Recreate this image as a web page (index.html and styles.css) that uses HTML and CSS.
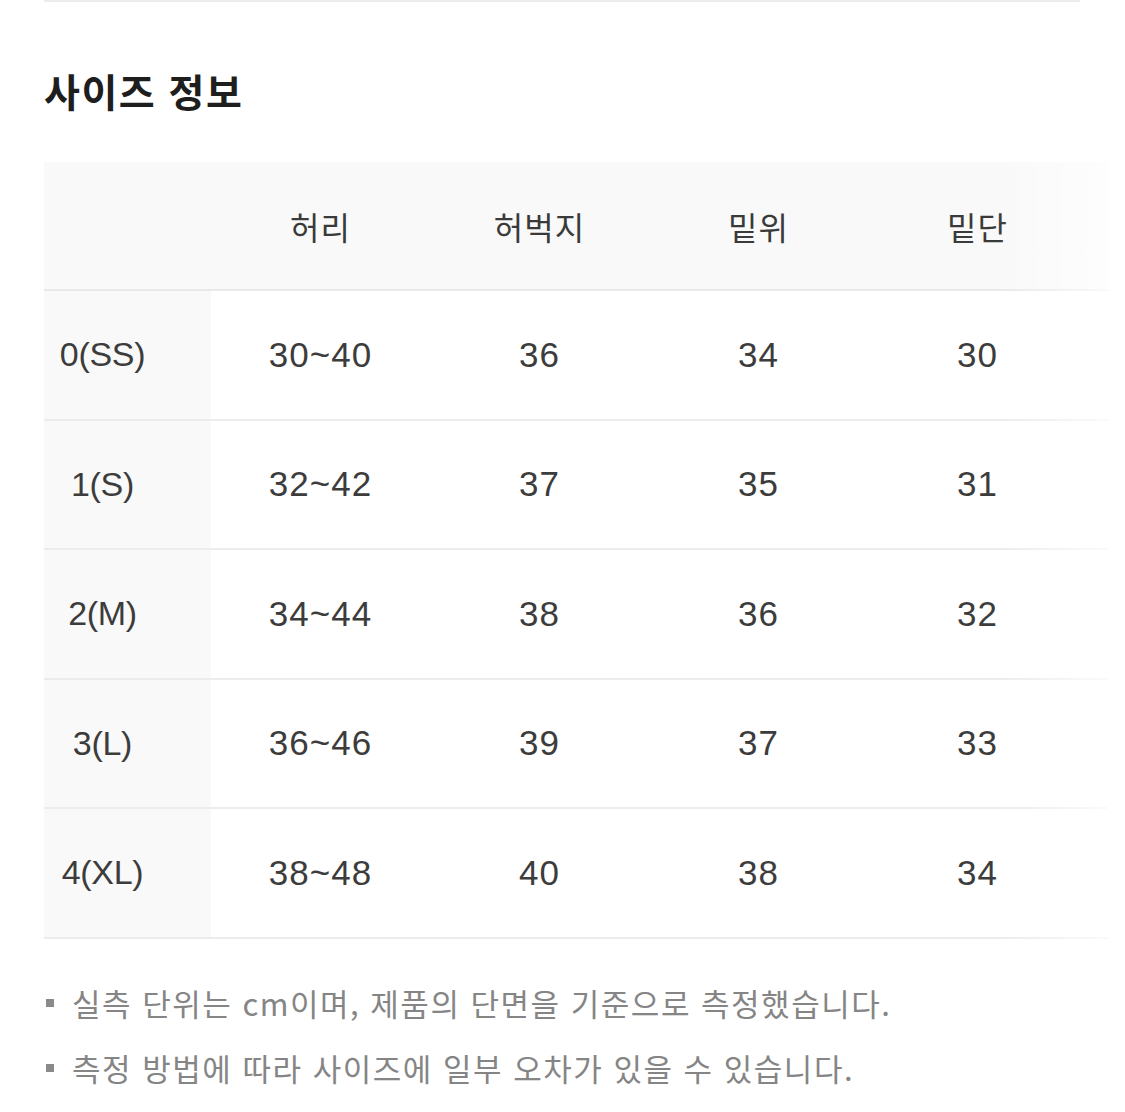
FILE: index.html
```html
<!DOCTYPE html>
<html lang="ko">
<head>
<meta charset="utf-8">
<link rel="stylesheet" href="styles.css">
</head>
<body>
<div class="page">
  <div class="topline"></div>
  <h2 class="title">사이즈 정보</h2>
  <div class="table-wrap">
    <table class="size-table">
      <colgroup>
        <col class="c-label"><col class="c-val"><col class="c-val"><col class="c-val"><col class="c-val"><col class="c-rest">
      </colgroup>
      <thead>
        <tr><th></th><th>허리</th><th>허벅지</th><th>밑위</th><th>밑단</th><th></th></tr>
      </thead>
      <tbody>
        <tr><td class="label">0(SS)</td><td>30~40</td><td>36</td><td>34</td><td>30</td><td></td></tr>
        <tr><td class="label">1(S)</td><td>32~42</td><td>37</td><td>35</td><td>31</td><td></td></tr>
        <tr><td class="label">2(M)</td><td>34~44</td><td>38</td><td>36</td><td>32</td><td></td></tr>
        <tr><td class="label">3(L)</td><td>36~46</td><td>39</td><td>37</td><td>33</td><td></td></tr>
        <tr><td class="label">4(XL)</td><td>38~48</td><td>40</td><td>38</td><td>34</td><td></td></tr>
      </tbody>
    </table>
    <div class="fade"></div>
  </div>
  <ul class="notes">
    <li>실측 단위는 cm이며, 제품의 단면을 기준으로 측정했습니다.</li>
    <li>측정 방법에 따라 사이즈에 일부 오차가 있을 수 있습니다.</li>
  </ul>
</div>
</body>
</html>
```

FILE: styles.css
```css
html, body {
  margin: 0;
  padding: 0;
  background: #fff;
}
body {
  font-family: "Liberation Sans", "Noto Sans CJK KR", sans-serif;
  color: #333;
}
.page {
  padding-left: 44px;
}
.topline {
  width: 1036px;
  height: 2px;
  background: #ececec;
}
.title {
  margin: 63px 0 0 0;
  font-family: "Noto Sans CJK KR", sans-serif;
  font-size: 39px;
  font-weight: 700;
  line-height: 50px;
  color: #1e1e1e;
  letter-spacing: 1.5px;
}
.table-wrap {
  position: relative;
  margin-top: 47px;
  width: 1064px;
  overflow: hidden;
}
.size-table {
  border-collapse: collapse;
  table-layout: fixed;
  width: 1064px;
}
.c-label { width: 167px; }
.c-val { width: 219px; }
.c-rest { width: 21px; }
.size-table th {
  height: 127px;
  padding: 0;
  background: #f9f9f9;
  font-family: "Noto Sans CJK KR", sans-serif;
  font-weight: 400;
  font-size: 32px;
  letter-spacing: 1px;
  color: #3a3a3a;
  text-align: center;
  border-bottom: 2px solid #e9e9e9;
}
.size-table td {
  height: 127.5px;
  padding: 0;
  font-size: 35px;
  letter-spacing: 1px;
  color: #3c3c3c;
  text-align: center;
  border-bottom: 2px solid #ececec;
}
.size-table td.label {
  background: #f9f9f9;
  padding-right: 50px;
  font-size: 34px;
  letter-spacing: -0.3px;
}
.fade {
  position: absolute;
  top: 0;
  right: 0;
  bottom: 0;
  width: 110px;
  background: linear-gradient(to right, rgba(255,255,255,0), rgba(255,255,255,0.75));
  pointer-events: none;
}
.notes {
  list-style: none;
  margin: 31px 0 0 0;
  padding: 0;
}
.notes li {
  position: relative;
  padding-left: 28px;
  font-family: "Noto Sans CJK KR", sans-serif;
  font-size: 31px;
  line-height: 65px;
  color: #858585;
  letter-spacing: 1.5px;
}
.notes li::before {
  content: "";
  position: absolute;
  left: 2px;
  top: 29px;
  width: 8px;
  height: 8px;
  background: #8a8a8a;
}
```
